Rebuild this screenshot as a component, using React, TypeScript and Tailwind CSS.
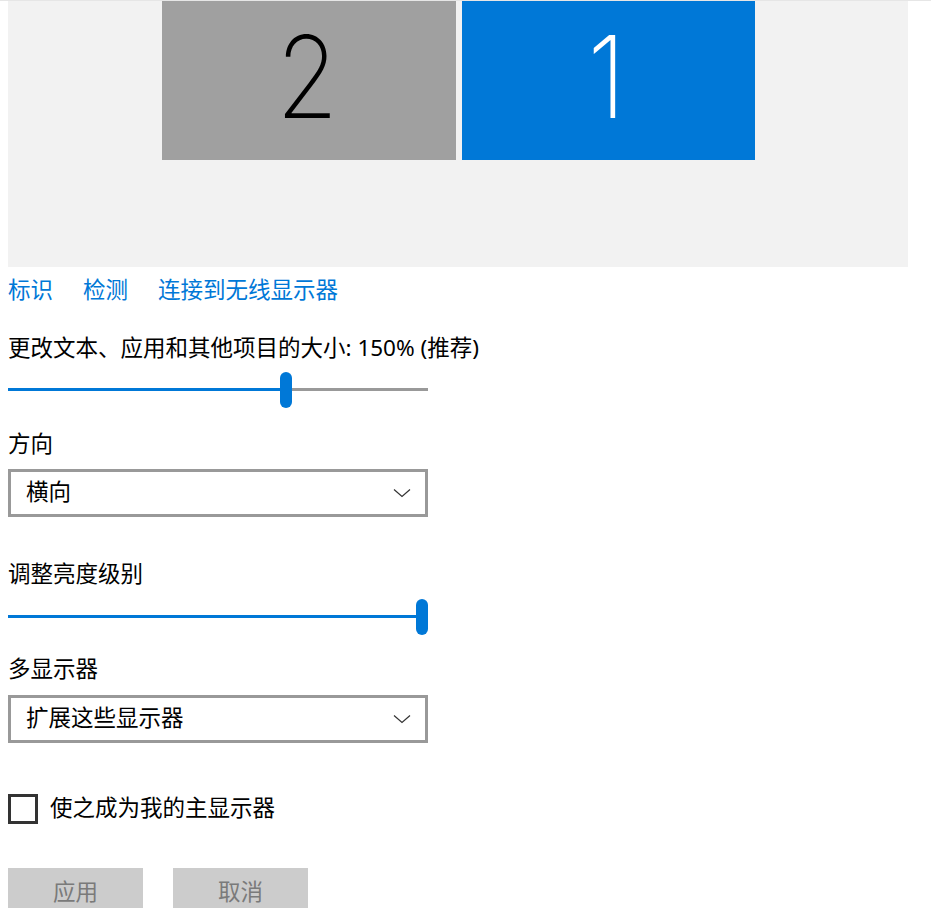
import React from 'react';

const font = { fontFamily: '"Noto Sans", "Noto Sans CJK SC", sans-serif' };

function Chevron() {
  return (
    <svg width="18" height="10" viewBox="0 0 18 10" className="shrink-0">
      <path d="M1 1.5 L9 8.5 L17 1.5" fill="none" stroke="#333" strokeWidth="1.2" />
    </svg>
  );
}

function Dropdown({ value }: { value: string }) {
  return (
    <div className="flex h-[48px] w-[420px] items-center justify-between border-[3px] border-[#999999] bg-white pl-[15px] pr-[14px]">
      <span className="-mt-[1px] text-[22.5px] leading-none text-black">{value}</span>
      <Chevron />
    </div>
  );
}

function Slider({ percent }: { percent: number }) {
  return (
    <div className="relative h-[36px] w-[420px]">
      <div className="absolute left-0 right-0 top-[16px] h-[3px] bg-[#999999]" />
      <div className="absolute left-0 top-[16px] h-[3px] bg-[#0078d7]" style={{ width: `${percent}%` }} />
      <div
        className="absolute top-0 h-[36px] w-[12px] rounded-full bg-[#0078d7]"
        style={{ left: `calc(${percent}% - ${(percent / 100) * 12}px)` }}
      />
    </div>
  );
}

function Label({ children }: { children: React.ReactNode }) {
  return <div className="flex h-[30px] items-center text-[22.5px] leading-none text-black">{children}</div>;
}

function Monitor({ n, className, text }: { n: string; className: string; text: string }) {
  return (
    <div className={`flex h-[159px] items-center justify-center ${className}`}>
      <span
        className={`-mt-[8px] -ml-[3px] text-[114px] font-extralight leading-none ${text}`}
        style={{ fontFamily: 'Inter, sans-serif', transform: 'scaleX(0.88)' }}
      >
        {n}
      </span>
    </div>
  );
}

export default function App() {
  return (
    <div className="min-h-[908px] w-[931px] overflow-hidden border-t border-[#e6e6e6] bg-white" style={font}>
      <div className="pl-[8px]">
        <div className="h-[266px] w-[900px] bg-[#f2f2f2]">
          <div className="flex justify-center gap-[6px]">
            <Monitor n="2" className="w-[294px] bg-[#a0a0a0]" text="text-black" />
            <Monitor n="1" className="w-[293px] bg-[#0078d7]" text="text-white" />
          </div>
        </div>

        <div className="mt-[8px] flex h-[30px] items-center gap-[30px] text-[22.5px] leading-none text-[#0078d7]">
          <span>标识</span>
          <span>检测</span>
          <span>连接到无线显示器</span>
        </div>

        <div className="mt-[28px]">
          <Label>更改文本、应用和其他项目的大小: 150% (推荐)</Label>
        </div>
        <div className="mt-[9px]">
          <Slider percent={66.7} />
        </div>

        <div className="mt-[21px]">
          <Label>方向</Label>
        </div>
        <div className="mt-[10px]">
          <Dropdown value="横向" />
        </div>

        <div className="mt-[42px]">
          <Label>调整亮度级别</Label>
        </div>
        <div className="mt-[10px]">
          <Slider percent={100} />
        </div>

        <div className="mt-[19px]">
          <Label>多显示器</Label>
        </div>
        <div className="mt-[11px]">
          <Dropdown value="扩展这些显示器" />
        </div>

        <div className="mt-[51px] flex items-center gap-[12px]">
          <div className="h-[30px] w-[30px] border-[3px] border-[#333333]" />
          <span className="-mt-[1px] text-[22.5px] leading-none text-black">使之成为我的主显示器</span>
        </div>

        <div className="mt-[44px] flex gap-[30px]">
          <div className="flex h-[48px] w-[135px] items-center justify-center bg-[#cccccc] text-[22.5px] leading-none text-[#7a7a7a]">
            应用
          </div>
          <div className="flex h-[48px] w-[135px] items-center justify-center bg-[#cccccc] text-[22.5px] leading-none text-[#7a7a7a]">
            取消
          </div>
        </div>
      </div>
    </div>
  );
}
